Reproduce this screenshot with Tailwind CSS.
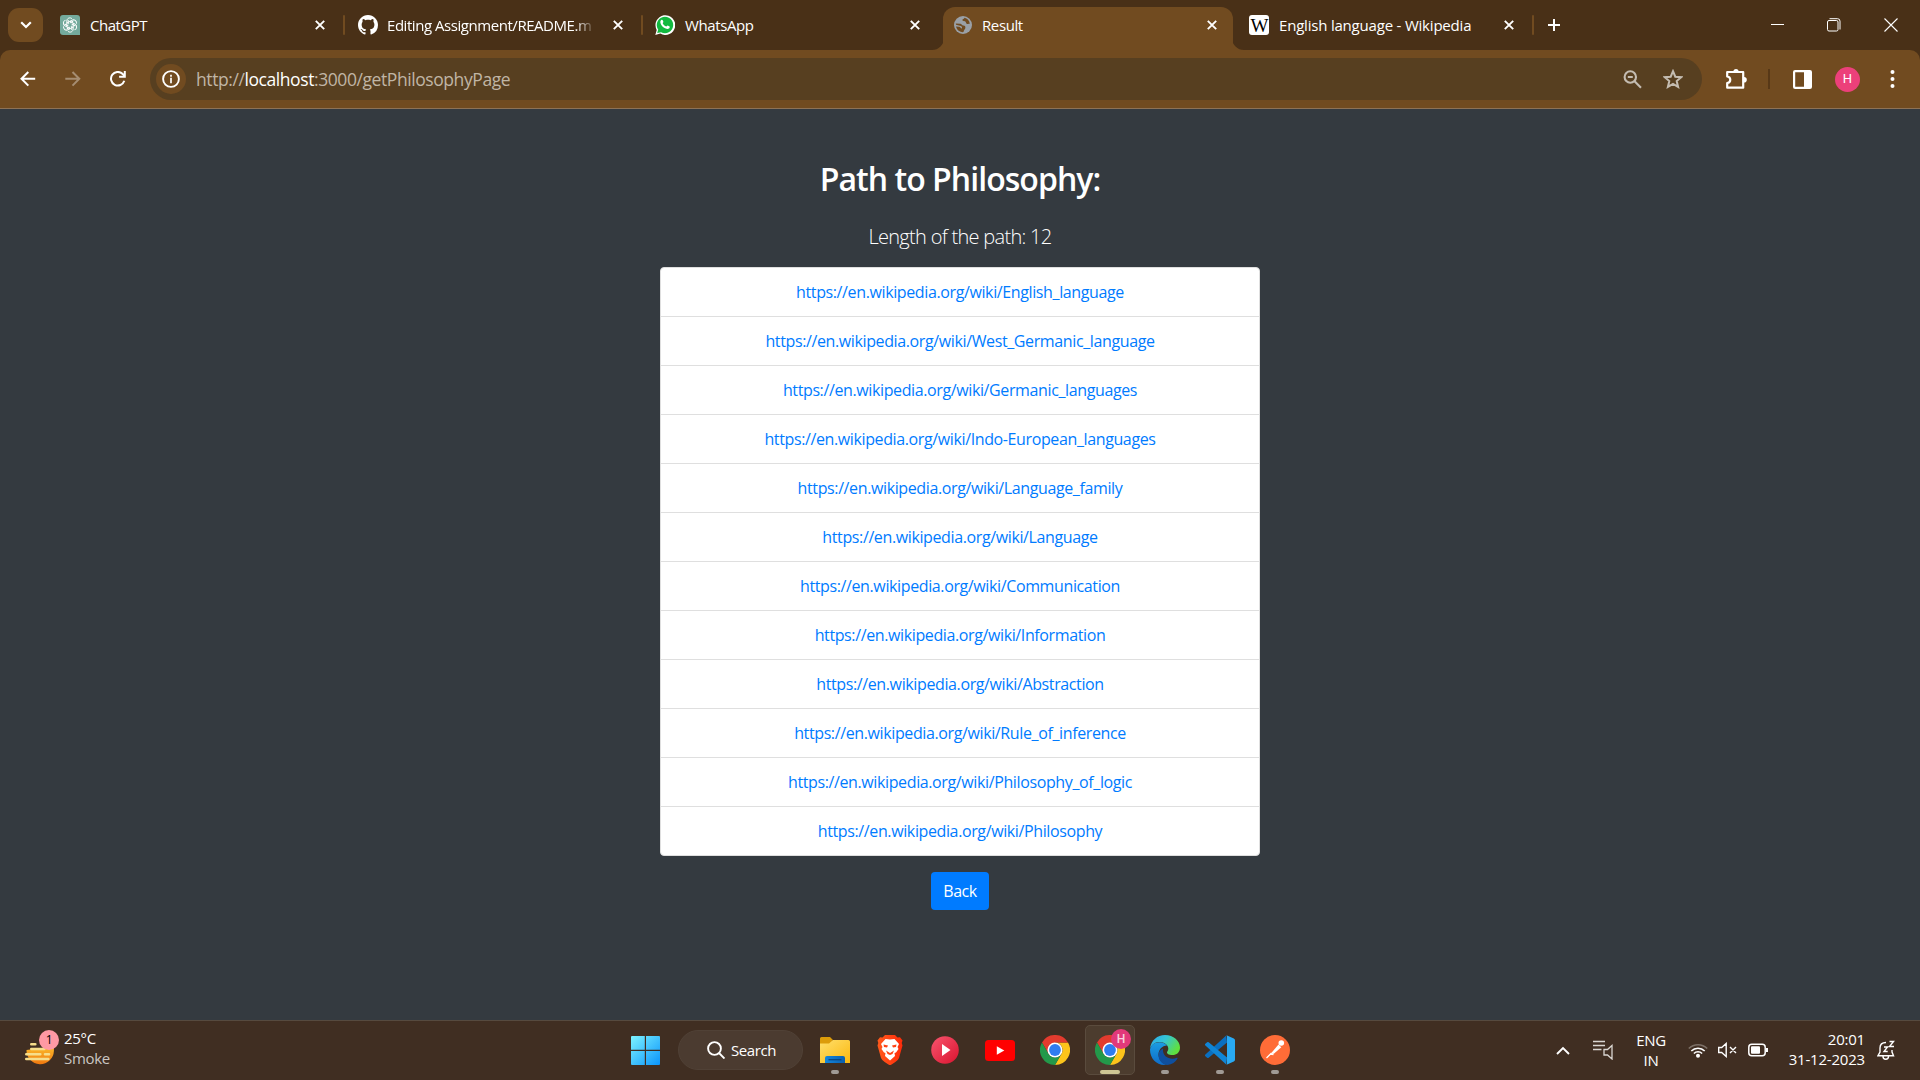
<!DOCTYPE html>
<html lang="en">
<head>
<meta charset="utf-8">
<title>Result</title>
<script src="https://cdn.jsdelivr.net/npm/@tailwindcss/browser@4"></script>
</head>
<body class="h-[1080px] w-[1920px] overflow-hidden bg-[#343a40] font-['Open_Sans','Noto_Sans',sans-serif] flex flex-col">

<svg class="absolute h-0 w-0">
  <defs>
    <linearGradient id="win" gradientUnits="userSpaceOnUse" x1="0" y1="0" x2="29" y2="29"><stop offset="0" stop-color="#7df3ff"/><stop offset="1" stop-color="#0a94fb"/></linearGradient>
    <linearGradient id="fold" x1="0" y1="0" x2="1" y2="1"><stop offset="0" stop-color="#ffdf6b"/><stop offset="1" stop-color="#fbb80f"/></linearGradient>
    <linearGradient id="foldb" x1="0" y1="0" x2="1" y2="0"><stop offset="0" stop-color="#1487dc"/><stop offset="1" stop-color="#0a5fb0"/></linearGradient>
    <linearGradient id="brave" x1="0" y1="0" x2="1" y2="0"><stop offset="0" stop-color="#ff5a1c"/><stop offset="1" stop-color="#ff2b0a"/></linearGradient>
    <linearGradient id="play" x1="0" y1="0" x2="1" y2="1"><stop offset="0" stop-color="#f9556f"/><stop offset="1" stop-color="#d9142f"/></linearGradient>
    <linearGradient id="edgeA" x1="0" y1="0" x2="1" y2="0.5"><stop offset="0" stop-color="#2aa6ee"/><stop offset=".5" stop-color="#35c5d3"/><stop offset="1" stop-color="#5fe03f"/></linearGradient>
    <linearGradient id="edgeB" x1="0" y1="0" x2="0" y2="1"><stop offset="0" stop-color="#1b9de2"/><stop offset="1" stop-color="#0f6cc9"/></linearGradient>
    <linearGradient id="sun" x1="0" y1="0" x2="0" y2="1"><stop offset="0" stop-color="#fdc52f"/><stop offset="1" stop-color="#f0780f"/></linearGradient>
    <symbol id="x" viewBox="0 0 10 10"><path d="M.8.8l8.4 8.4M9.2.8L.8 9.2" stroke="#fff" stroke-width="1.9" fill="none"/></symbol>
    <symbol id="chrome" viewBox="0 0 30 30">
      <path d="M28 7.500A15 15 0 0 1 15 30L21.500 18.750A7.500 7.500 0 0 0 15 7.500z" fill="#fcc41b"/>
      <path d="M2 7.500L8.500 18.750L15 15V7.500H28A15 15 0 0 0 2 7.500z" fill="#e33b2e"/>
      <path d="M2 7.500A15 15 0 0 0 15 30L21.500 18.750A7.500 7.500 0 0 1 8.500 18.750z" fill="#23994a"/>
      <circle cx="15" cy="15" r="7.500" fill="#fff"/><circle cx="15" cy="15" r="5.900" fill="#2f7cf0"/>
    </symbol>
  </defs>
</svg>

<!-- Tab strip -->
<header class="flex h-[50px] shrink-0 bg-[#493017] text-[15px] text-white">
  <div class="ml-2 mt-2 flex h-[34px] w-[35px] items-center justify-center rounded-[11px] bg-[#714b20]">
    <svg class="h-[8px] w-[12px]" viewBox="0 0 12 8"><path d="M1.200 1.200L6 6l4.800-4.800" fill="none" stroke="#fff" stroke-width="2.200"/></svg>
  </div>
  <div class="ml-[17px] flex h-[50px] w-[285px] items-center">
    <svg class="h-5 w-5" viewBox="0 0 20 20"><path d="M3 0H17a3 3 0 0 1 3 3V20H3a3 3 0 0 1-3-3V3a3 3 0 0 1 3-3z" fill="#74aa9c"/><g fill="none" stroke="#fff" stroke-width="1">
      <g id="petal"><path d="M6.800 11.900V6.200C6.800 3.200 9.900 1.900 12 3.700M9.800 8.100L13.500 5.900"/></g>
      <use href="#petal" transform="rotate(60 10 10)"/><use href="#petal" transform="rotate(120 10 10)"/><use href="#petal" transform="rotate(180 10 10)"/><use href="#petal" transform="rotate(240 10 10)"/><use href="#petal" transform="rotate(300 10 10)"/></g></svg>
    <span class="ml-[10px] w-[225px] tracking-[-0.5px]">ChatGPT</span>
    <svg class="h-[10px] w-[10px]"><use href="#x"/></svg>
    <span class="ml-[18px] h-5 w-[2px] rounded bg-[#714b20]"></span>
  </div>
  <div class="ml-[13px] flex h-[50px] w-[284px] items-center">
    <svg class="h-5 w-5 shrink-0" viewBox="0 0 16 16"><path fill="#fff" d="M8 0C3.580 0 0 3.580 0 8c0 3.540 2.290 6.530 5.470 7.590.4.070.55-.17.55-.38 0-.19-.01-.82-.01-1.490-2.010.37-2.530-.49-2.690-.94-.09-.23-.48-.94-.82-1.130-.28-.15-.68-.52-.01-.53.63-.01 1.080.58 1.230.82.72 1.210 1.870.87 2.330.66.07-.52.28-.87.51-1.070-1.780-.2-3.640-.89-3.640-3.950 0-.87.31-1.590.82-2.150-.08-.2-.36-1.020.08-2.120 0 0 .67-.21 2.200.82.64-.18 1.320-.27 2-.27s1.360.09 2 .27c1.530-1.040 2.200-.82 2.200-.82.44 1.100.16 1.920.08 2.120.51.56.82 1.270.82 2.150 0 3.070-1.870 3.750-3.650 3.950.29.25.54.73.54 1.480 0 1.070-.01 1.930-.01 2.200 0 .21.15.46.55.38A8.010 8.010 0 0 0 16 8c0-4.420-3.580-8-8-8z"/></svg>
    <span class="ml-[9px] w-[209px] shrink-0 overflow-hidden whitespace-nowrap tracking-[-0.45px] [mask-image:linear-gradient(to_right,black_188px,transparent_209px)]">Editing Assignment/README.m</span>
    <svg class="ml-[17px] h-[10px] w-[10px] shrink-0"><use href="#x"/></svg>
    <span class="ml-[18px] h-5 w-[2px] shrink-0 rounded bg-[#714b20]"></span>
  </div>
  <div class="ml-[13px] flex h-[50px] w-[265px] items-center">
    <svg class="h-5 w-5" viewBox="0 0 20 20"><path d="M.3 20l1.400-5.100A9.900 9.900 0 1 1 5.300 18.600z" fill="#fff"/><path d="M2.200 18.100l1-3.500A8.200 8.200 0 1 1 6.100 17.200z" fill="#12b93f"/><path d="M6.200 5.100c.6-.6 1.300-.5 1.500.1l.7 1.600c.1.500-.5 1-.7 1.400.6 1.500 2 2.800 3.600 3.400.5-.2.900-1.300 1.400-1.100l1.900.9c.4.400 0 1.700-.7 2.200-1 .7-2.200.4-3.800-.3-2-.9-3.600-2.700-4.300-4.300-.7-1.500-.6-3 .4-3.900z" fill="#fff"/></svg>
    <span class="ml-[10px] w-[225px] tracking-[-0.4px]">WhatsApp</span>
    <svg class="h-[10px] w-[10px] shrink-0"><use href="#x"/></svg>
  </div>
  <!-- active tab -->
  <div class="ml-[12px] mt-[7px] flex h-[43px] items-end">
    <svg class="-mr-px h-3 w-3" viewBox="0 0 12 12"><path d="M12 0v12H0A12 12 0 0 0 12 0" fill="#714b20"/></svg>
    <div class="flex h-[43px] w-[290px] items-center rounded-t-[12px] bg-[#714b20] pb-[7px] pl-[11px]">
      <svg class="h-[18px] w-[18px]" viewBox="0 0 18 18"><circle cx="9" cy="9" r="9" fill="#9aa0a6"/><path d="M1.800 7.500L6.200 7.800C7.800 8 7.800 9.500 9.300 9.500c2 0 2.300 1.300 2 2.700-.3 1.300-1.500 1.600-1.800 3.900-3 .3-6.500-1.500-7.500-5.500L5 10.700c1.800 0 1.500 1.800 2.800 1.800.6-.8.200-2-.9-2.600L2 8.800zM10.500 1.800c-.3 1.400-2 1-2.100 2.300 0 1.700 3.300.6 3.600 2.600.3 1.400 1.500 1.300 3.800 1.100C15.500 4.500 13.300 2.300 10.500 1.800z" fill="#714b20"/></svg>
      <span class="ml-[10px] w-[225px] tracking-[-0.4px]">Result</span>
      <svg class="h-[10px] w-[10px]"><use href="#x"/></svg>
    </div>
    <svg class="-ml-px h-3 w-3" viewBox="0 0 12 12"><path d="M0 0v12h12A12 12 0 0 1 0 0" fill="#714b20"/></svg>
  </div>
  <div class="ml-[5px] flex h-[50px] w-[285px] items-center">
    <span class="flex h-5 w-5 items-center justify-center rounded-[3px] bg-white font-['Liberation_Serif',serif] text-[19px] leading-none tracking-[-1px] text-black">W</span>
    <span class="ml-[10px] w-[225px] whitespace-nowrap tracking-[-0.2px]">English language - Wikipedia</span>
    <svg class="h-[10px] w-[10px]"><use href="#x"/></svg>
    <span class="ml-[18px] h-5 w-[2px] rounded bg-[#714b20]"></span>
  </div>
  <svg class="ml-[14px] mt-[19px] h-3 w-3" viewBox="0 0 12 12"><path d="M6 0v12M0 6h12" stroke="#fff" stroke-width="2"/></svg>
  <div class="ml-auto mr-[22px] flex items-center gap-[43px]">
    <svg class="h-[14px] w-[14px]" viewBox="0 0 14 14"><path d="M1 6.500h13" stroke="#fff"/></svg>
    <svg class="h-[14px] w-[14px]" viewBox="0 0 14 14" fill="none" stroke="#fff"><rect x=".5" y="2.500" width="10.500" height="10.500" rx="1.500"/><path d="M2.500.7H10.500a2.500 2.500 0 0 1 2.500 2.500v8.300"/></svg>
    <svg class="h-[14px] w-[14px]" viewBox="0 0 14 14"><path d="M.5.5l13 13M13.500.5l-13 13" stroke="#fff" stroke-width="1.100"/></svg>
  </div>
</header>

<!-- Toolbar -->
<div class="shrink-0 bg-[#493017]">
<nav class="flex h-[59px] items-center rounded-t-[10px] border-b border-[#8d7256] bg-[#714b20]">
  <svg class="ml-5 h-4 w-4" viewBox="0 0 16 16" fill="none" stroke="#fff" stroke-width="2"><path d="M15.200 7.800H1.500M8.300 1L1.500 7.800l6.800 6.800"/></svg>
  <svg class="ml-[29px] h-4 w-4" viewBox="0 0 16 16" fill="none" stroke="#a58d72" stroke-width="2"><path d="M.3 7.800h14M7.500 1L14.300 7.800l-6.800 6.800"/></svg>
  <svg class="ml-[29px] h-4 w-4" viewBox="0 0 16 16"><path d="M14.300 9.800A6.800 6.800 0 1 1 12.700 3L14.500 5" fill="none" stroke="#fff" stroke-width="2"/><path d="M15.800 0v6.700H9.100V4.800H13.800V0z" fill="#fff"/></svg>
  <div class="ml-[24px] flex h-[42px] w-[1552px] items-center rounded-full bg-[#573f20] pl-[6px]">
    <span class="flex h-[30px] w-[30px] items-center justify-center rounded-full bg-[#714b20]"><svg class="h-[18px] w-[18px]" viewBox="0 0 18 18"><circle cx="9" cy="9" r="7.900" fill="none" stroke="#fff" stroke-width="1.900"/><path d="M9 7.800v5.400M9 4.800v1.900" stroke="#fff" stroke-width="1.700"/></svg></span>
    <span class="ml-[10px] grow text-[17.5px] tracking-[-0.42px] text-[#c0b5a5]">http://<span class="text-white">localhost</span>:3000/getPhilosophyPage</span>
    <svg class="h-[19px] w-[19px]" viewBox="0 0 19 19" fill="none" stroke="#c4bcb1" stroke-width="2.100"><circle cx="7.300" cy="7" r="5.700"/><path d="M11.300 11l6.700 6.700M4.800 7h5"/></svg>
    <svg class="ml-[21px] mr-[19px] h-[20px] w-[20px]" viewBox="0 0 20 20"><path d="M10 2.200l2.300 5.500 5.900.5-4.500 3.900 1.400 5.800L10 14.800l-5.100 3.100 1.400-5.800L1.800 8.200l5.900-.5z" fill="none" stroke="#c4bcb1" stroke-width="2"/></svg>
  </div>
  <svg class="ml-[23px] h-[22px] w-[22px]" viewBox="0 0 22 22"><path d="M2.200 4H18.200V19.700H2.200V15C6.300 14.500 6.300 9 2.200 8.500z" fill="none" stroke="#fff" stroke-width="2.200" stroke-linejoin="round"/><path d="M8.400 3.500a2.600 2.600 0 0 1 5.200 0zM19 9a2.800 2.800 0 0 1 0 5.600z" fill="#fff"/></svg>
  <span class="ml-[21px] h-5 w-[2px] bg-[#573817]"></span>
  <svg class="ml-[23px] h-[19px] w-[19px]" viewBox="0 0 19 19"><rect x="1.100" y="1.100" width="16.800" height="16.800" rx="1" fill="none" stroke="#fff" stroke-width="2.200"/><path d="M11 1h7v17h-7z" fill="#fff"/></svg>
  <span class="ml-[23px] flex h-[25px] w-[25px] items-center justify-center rounded-full bg-[#ec407a] font-['Roboto'] text-[13px] text-white">H</span>
  <svg class="ml-[30px] h-[18px] w-[5px]" viewBox="0 0 5 18" fill="#fff"><circle cx="2.500" cy="2" r="2"/><circle cx="2.500" cy="9" r="2"/><circle cx="2.500" cy="16" r="2"/></svg>
</nav>
</div>

<!-- Page -->
<main class="flex min-h-0 grow flex-col items-center pt-[51px] text-white">
  <h2 class="text-[32px] font-semibold leading-[38px] tracking-[-0.95px]">Path to Philosophy:</h2>
  <p class="mt-[24px] text-[20px] font-light leading-[30px] tracking-[-0.7px]">Length of the path: 12</p>
  <ul class="mt-[15px] w-[600px] divide-y divide-[#dfdfdf] rounded-[4px] border border-[#dfdfdf] bg-white text-center text-[16px] leading-6 tracking-[-0.38px] text-[#007bff]">
    <li class="h-[49px] py-3"><a>https://en.wikipedia.org/wiki/English_language</a></li>
    <li class="h-[49px] py-3"><a>https://en.wikipedia.org/wiki/West_Germanic_language</a></li>
    <li class="h-[49px] py-3"><a>https://en.wikipedia.org/wiki/Germanic_languages</a></li>
    <li class="h-[49px] py-3"><a>https://en.wikipedia.org/wiki/Indo-European_languages</a></li>
    <li class="h-[49px] py-3"><a>https://en.wikipedia.org/wiki/Language_family</a></li>
    <li class="h-[49px] py-3"><a>https://en.wikipedia.org/wiki/Language</a></li>
    <li class="h-[49px] py-3"><a>https://en.wikipedia.org/wiki/Communication</a></li>
    <li class="h-[49px] py-3"><a>https://en.wikipedia.org/wiki/Information</a></li>
    <li class="h-[49px] py-3"><a>https://en.wikipedia.org/wiki/Abstraction</a></li>
    <li class="h-[49px] py-3"><a>https://en.wikipedia.org/wiki/Rule_of_inference</a></li>
    <li class="h-[49px] py-3"><a>https://en.wikipedia.org/wiki/Philosophy_of_logic</a></li>
    <li class="h-[48px] py-3"><a>https://en.wikipedia.org/wiki/Philosophy</a></li>
  </ul>
  <button class="mt-[16px] h-[38px] w-[58px] rounded-[4px] bg-[#007bff] text-[16px] tracking-[-0.5px]">Back</button>
</main>

<!-- Taskbar -->
<footer class="flex h-[60px] shrink-0 items-center border-t border-[#564a3f] bg-[#402e22] pb-px text-[15px] text-white">
  <div class="flex w-[631px] items-center pb-[4px] pl-[25px] tracking-[-0.3px]">
    <div class="relative h-[36px] w-[35px]">
      <svg class="h-[36px] w-[35px]" viewBox="0 0 35 36"><path d="M1.500 20a13.700 13.700 0 0 0 27.400 1V14l-12 4z" fill="url(#sun)"/><g stroke="#f6dd8b" stroke-width="2.600" stroke-linecap="round"><path d="M6.300 14.200h4M6.300 19h13M1.300 24.300h14M20 24.300h4M1.300 29h22"/></g></svg>
      <span class="absolute left-[14px] top-0 flex h-5 w-5 items-center justify-center rounded-full bg-[#ff99a4] text-[12px] text-black">1</span>
    </div>
    <div class="ml-[4px] leading-[20px]"><div>25°C</div><div class="text-[#cbc6c2]">Smoke</div></div>
  </div>
  <svg class="h-[29px] w-[29px]" viewBox="0 0 29 29" fill="url(#win)"><path d="M1 0H13.800V13.800H0V1A1 1 0 0 1 1 0zM15 0h13A1 1 0 0 1 29 1V13.800H15zM0 15h13.800v14H1A1 1 0 0 1 0 28zM15 15h14v13a1 1 0 0 1-1 1H15z"/></svg>
  <div class="ml-[18px] flex h-10 w-[125px] items-center rounded-full border border-[#504136] bg-[#4b3b30] pl-[28px]">
    <svg class="h-[18px] w-[18px]" viewBox="0 0 18 18" fill="none" stroke="#fff" stroke-width="1.900"><circle cx="7.500" cy="7.500" r="6.400"/><path d="M12 12l5.500 5.500"/></svg>
    <span class="ml-[6px] tracking-[-0.4px]">Search</span>
  </div>
  <div class="ml-[7px] flex items-center gap-[5px]">
    <div class="relative flex h-[50px] w-[50px] items-center justify-center">
      <svg class="h-[30px] w-[30px]" viewBox="0 0 30 30"><path d="M0 3.500A1.500 1.500 0 0 1 1.500 2H10l3 3-3 5H0z" fill="#dc9c0a"/><path d="M0 8.500H9L13 5H28.500A1.500 1.500 0 0 1 30 6.500V28H0z" fill="url(#fold)"/><path d="M5 28V23a2 2 0 0 1 2-2H23a2 2 0 0 1 2 2v5z" fill="url(#foldb)"/><path d="M8.500 24.700h13" stroke="#0a4682" stroke-width="1.300"/></svg>
      <span class="absolute bottom-[1px] h-1 w-2 rounded-full bg-[#a09a95]"></span>
    </div>
    <div class="flex h-[50px] w-[50px] items-center justify-center">
      <svg class="h-[30px] w-[26px]" viewBox="0 0 26 30"><path d="M8 0H18L20.500 2.500 23 2.200 25.500 5.500 24.700 8 25.500 10.500 22 23Q21 25.500 18 27.300L13 30.500 8 27.300Q5 25.500 4 23L.5 10.500 1.300 8 .5 5.500 3 2.200 5.500 2.500z" fill="url(#brave)"/><path d="M13 4.500L17.500 4 22 9 20.500 12 21.500 14 19 17.500 17.500 18 18 21 13 25.500 8 21 8.500 18 7 17.500 4.500 14 5.500 12 4 9 8.500 4z" fill="#fff"/><path d="M6.500 9.500l4.500 1-1 2-3-.5zM19.500 9.500l-4.500 1 1 2 3-.5zM9 15.500l4 2.500 4-2.500-1.500 3.500-2.500 1-2.500-1z" fill="#ff4315"/></svg>
    </div>
    <div class="flex h-[50px] w-[50px] items-center justify-center">
      <svg class="h-[28px] w-[28px]" viewBox="0 0 28 28"><circle cx="14" cy="14" r="13.800" fill="url(#play)"/><path d="M11 8v12l8.500-6z" fill="#fff"/></svg>
    </div>
    <div class="flex h-[50px] w-[50px] items-center justify-center">
      <svg class="h-[21px] w-[30px]" viewBox="0 0 30 21"><rect width="30" height="21" rx="3.500" fill="#f00"/><path d="M11.800 6.200v8.600l7.500-4.300z" fill="#fff"/></svg>
    </div>
    <div class="flex h-[50px] w-[50px] items-center justify-center"><svg class="h-[30px] w-[30px]"><use href="#chrome"/></svg></div>
    <div class="relative flex h-[50px] w-[50px] items-center justify-center rounded-[5px] border border-[#5a4b3d] bg-[#4c3c2e]">
      <svg class="h-[30px] w-[30px]"><use href="#chrome"/></svg>
      <span class="absolute left-[25px] top-[3px] flex h-5 w-5 items-center justify-center rounded-full bg-[#e2397a] font-['Roboto'] text-[12px] font-medium text-[#f9d3df]">H</span>
      <span class="absolute bottom-0 h-1 w-5 rounded-full bg-[#cfc694]"></span>
    </div>
    <div class="relative flex h-[50px] w-[50px] items-center justify-center">
      <svg class="h-[30px] w-[30px]" viewBox="0 0 30 30"><path d="M0 14C1 5 7.500 0 15 0c8.500 0 15 6 15 12.500 0 5-3.500 7.500-7.500 7.500-4 0-5.500-1.500-5.500-2.500s1.300-1.500 1.300-4C18.300 10 14.500 7 9.500 7 4.500 7 1 10.500 0 14z" fill="url(#edgeA)"/><path d="M0 14.500C1 10 4.500 7.200 9.500 7.200c3.500 0 6 1.400 7.500 3.300C12 10.500 8.500 15 8.500 19.500c0 5 3.500 9 8 10.300C7 31 0 24 0 14.500z" fill="url(#edgeB)"/><path d="M13 13.500c-3 1.500-4.500 3.700-4.500 6.500 0 5.500 4 10 9 10 4.500-.5 8-3 10-6.500.3-.7-.3-1-.8-.7C21.200 25.500 12 22.500 13 13.500z" fill="#0f4f9e"/></svg>
      <span class="absolute bottom-[1px] h-1 w-2 rounded-full bg-[#a09a95]"></span>
    </div>
    <div class="relative flex h-[50px] w-[50px] items-center justify-center">
      <svg class="h-[30px] w-[30px]" viewBox="0 0 30 30"><path d="M22 7.500L3.700 22.800a1.300 1.300 0 0 1-1.600 0L.4 21.300a1.200 1.200 0 0 1 0-1.800L21.200.5z" fill="#0a6fc0"/><path d="M22 22.500L3.700 7.200a1.300 1.300 0 0 0-1.600 0L.4 8.700a1.200 1.200 0 0 0 0 1.800L21.200 29.500z" fill="#1085d6"/><path d="M21.500.3L28.800 3.500A2 2 0 0 1 30 5.300V24.700a2 2 0 0 1-1.200 1.800L21.500 29.700Q22 29 22 28V2Q22 1 21.500.3z" fill="#29aaf3"/></svg>
      <span class="absolute bottom-[1px] h-1 w-2 rounded-full bg-[#a09a95]"></span>
    </div>
    <div class="relative flex h-[50px] w-[50px] items-center justify-center">
      <svg class="h-[30px] w-[30px]" viewBox="0 0 30 30"><circle cx="15" cy="15" r="15" fill="#ff6c37"/><circle cx="21.300" cy="8" r="2.800" fill="#fff"/><path d="M18.500 9.500l2.800 2.800-7.500 6.500-3.300.2z" fill="#fff"/><path d="M11.500 18l-5 5M10.500 19l3 .5" stroke="#fff" stroke-width="1.300"/></svg>
      <span class="absolute bottom-[1px] h-1 w-2 rounded-full bg-[#a09a95]"></span>
    </div>
  </div>
  <div class="ml-auto mr-[25px] flex items-center">
    <svg class="h-[9px] w-[14px]" viewBox="0 0 14 9"><path d="M1 8l6-6 6 6" fill="none" stroke="#fff" stroke-width="1.900"/></svg>
    <svg class="ml-[23px] h-[20px] w-[20px]" viewBox="0 0 20 20" fill="none" stroke="#d9d5d1" stroke-width="1.300"><path d="M0 1.500h12M0 5.500h12M0 9.500h8.500M11 9.500h3.500l4.500-4v13.500l-4.500-4H11z"/></svg>
    <div class="ml-[23px] w-[30px] pb-[1px] text-center leading-[20px] tracking-[-0.3px]">ENG<br>IN</div>
    <svg class="ml-[22px] h-[16px] w-[20px]" viewBox="0 0 20 16" fill="none" stroke="#fff" stroke-width="1.600"><path d="M.8 6.500a13 13 0 0 1 18.400 0" stroke="#7c7067"/><path d="M3.300 9a9.500 9.500 0 0 1 13.400 0M5.900 11.500a5.800 5.800 0 0 1 8.200 0"/><circle cx="10" cy="13.800" r="1.200" fill="#fff"/></svg>
    <svg class="ml-[10px] h-[16px] w-[19px]" viewBox="0 0 19 16" fill="none" stroke="#fff" stroke-width="1.400"><path d="M.7 5.500h3l4.500-4v13l-4.500-4h-3zM12 5l6 6M18 5l-6 6"/></svg>
    <svg class="ml-[11px] h-[14px] w-[20px]" viewBox="0 0 20 14"><rect x=".8" y="1.200" width="16.400" height="11.600" rx="3" fill="none" stroke="#fff" stroke-width="1.500"/><rect x="3" y="3.300" width="9" height="7.400" rx="1" fill="#fff"/><path d="M18 5h2v4h-2z" fill="#fff"/></svg>
    <div class="ml-[10px] w-[87px] pb-[3px] text-right leading-[20px] tracking-[-0.2px]">20:01<br>31-12-2023</div>
    <svg class="ml-[12px] h-[20px] w-[18px]" viewBox="0 0 18 20" fill="none" stroke="#fff" stroke-width="1.400"><path d="M9 2.500C5 2.500 3 5 3 8v4L1 15.700h15.500L15 12V10M6 16.500a2.700 2.700 0 0 0 5.500 0M12.500 1.500h4l-4 5h4.500M7 7h3.500L7 11.500h3.700"/></svg>
  </div>
</footer>
</body>
</html>
